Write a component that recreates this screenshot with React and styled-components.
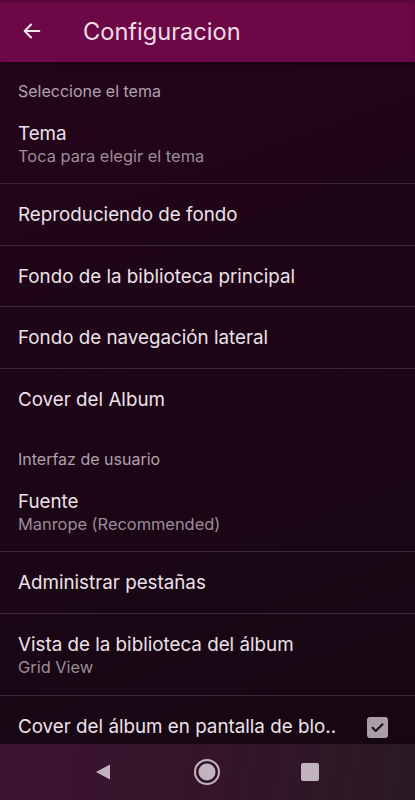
import React, { useState } from "react";
import styled, { createGlobalStyle } from "styled-components";

const GlobalStyle = createGlobalStyle`
  html, body {
    margin: 0;
    padding: 0;
    background: #1a0615;
  }
  body {
    font-family: Inter, "Noto Sans", sans-serif;
  }
`;

const sections = [
  {
    title: "Seleccione el tema",
    items: [
      { label: "Tema", sub: "Toca para elegir el tema" },
      { label: "Reproduciendo de fondo" },
      { label: "Fondo de la biblioteca principal" },
      { label: "Fondo de navegación lateral" },
      { label: "Cover del Album", last: true },
    ],
  },
  {
    title: "Interfaz de usuario",
    items: [
      { label: "Fuente", sub: "Manrope (Recommended)" },
      { label: "Administrar pestañas" },
      { label: "Vista de la biblioteca del álbum", sub: "Grid View" },
      { label: "Cover del álbum en pantalla de blo..", check: true, last: true },
    ],
  },
];

function App() {
  const [lockCover, setLockCover] = useState(true);

  return (
    <Screen>
      <GlobalStyle />
      <Toolbar>
        <BackButton aria-label="Volver">
          <svg width="22" height="22" viewBox="0 0 24 24" fill="none">
            <path
              d="M20 12H4.5M11 5l-7 7 7 7"
              stroke="#f4e6ee"
              strokeWidth="2.2"
              strokeLinecap="round"
              strokeLinejoin="round"
            />
          </svg>
        </BackButton>
        <Title>Configuracion</Title>
      </Toolbar>

      <Content>
        {sections.map((section) => (
          <section key={section.title}>
            <Category>{section.title}</Category>
            {section.items.map((item) => (
              <Row key={item.label} $tall={!!item.sub} $last={item.last}>
                <RowText>
                  <Label>{item.label}</Label>
                  {item.sub && <Sub>{item.sub}</Sub>}
                </RowText>
                {item.check && (
                  <Checkbox
                    $checked={lockCover}
                    onClick={() => setLockCover(!lockCover)}
                  >
                    {lockCover && (
                      <svg width="17" height="17" viewBox="0 0 24 24" fill="none">
                        <path
                          d="M5 12.5l4.5 4.5L19 7.5"
                          stroke="#1e1219"
                          strokeWidth="3"
                          strokeLinecap="round"
                          strokeLinejoin="round"
                        />
                      </svg>
                    )}
                  </Checkbox>
                )}
              </Row>
            ))}
          </section>
        ))}
      </Content>

      <NavBar>
        <svg width="18" height="18" viewBox="0 0 18 18">
          <path d="M16 1.5v15L2 9z" fill="#c3b3bf" />
        </svg>
        <svg width="28" height="28" viewBox="0 0 28 28">
          <circle cx="14" cy="14" r="12" fill="none" stroke="#c3b3bf" strokeWidth="2" />
          <circle cx="14" cy="14" r="8.5" fill="#c3b3bf" />
        </svg>
        <svg width="18" height="18" viewBox="0 0 18 18">
          <rect x="0" y="0" width="18" height="18" rx="2" fill="#c3b3bf" />
        </svg>
      </NavBar>
    </Screen>
  );
}

const Screen = styled.div`
  width: 415px;
  height: 800px;
  display: flex;
  flex-direction: column;
  overflow: hidden;
  background: linear-gradient(160deg, #25051c 0%, #1d0517 45%, #150812 100%);
`;

const Toolbar = styled.header`
  height: 62px;
  flex-shrink: 0;
  display: flex;
  align-items: center;
  padding: 0 18px;
  box-sizing: border-box;
  background: #6c0845;
  box-shadow: inset 0 3px 0 #5c073b, inset -5px 0 0 #650740, 0 2px 4px rgba(0, 0, 0, 0.35);
`;

const BackButton = styled.button`
  width: 28px;
  height: 28px;
  display: flex;
  align-items: center;
  justify-content: center;
  padding: 0;
  border: none;
  background: none;
  cursor: pointer;
`;

const Title = styled.h1`
  margin: 0 0 0 37px;
  font-size: 23.6px;
  font-weight: 400;
  color: #f3dbe8;
`;

const Content = styled.main`
  flex: 1;
  overflow: hidden;
`;

const Category = styled.div`
  height: 40px;
  box-sizing: border-box;
  padding: 19px 18px 0;
  font-size: 16px;
  line-height: 20px;
  color: #b2a2ad;
`;

const Row = styled.div`
  height: ${(p) => (p.$tall ? "82px" : "61.5px")};
  box-sizing: border-box;
  display: flex;
  align-items: center;
  justify-content: space-between;
  padding: 2px 27px 0 18px;
  border-bottom: ${(p) => (p.$last ? "none" : "1px solid #3d2637")};
`;

const RowText = styled.div`
  display: flex;
  flex-direction: column;
  min-width: 0;
`;

const Label = styled.div`
  font-size: 18.8px;
  line-height: 24px;
  color: #ece2e8;
  white-space: nowrap;
`;

const Sub = styled.div`
  font-size: 16.4px;
  line-height: 20px;
  color: #9c8c97;
  white-space: nowrap;
`;

const Checkbox = styled.div`
  width: 21px;
  height: 21px;
  flex-shrink: 0;
  border-radius: 3px;
  background: ${(p) => (p.$checked ? "#aa9ea8" : "transparent")};
  border: ${(p) => (p.$checked ? "none" : "2px solid #aa9ea8")};
  display: flex;
  align-items: center;
  justify-content: center;
  cursor: pointer;
`;

const NavBar = styled.nav`
  height: 56px;
  flex-shrink: 0;
  display: flex;
  align-items: center;
  justify-content: space-between;
  padding: 0 96px 0 94px;
  background: linear-gradient(100deg, #3e1433 0%, #341429 50%, #2a1a24 100%);
`;

export default App;
